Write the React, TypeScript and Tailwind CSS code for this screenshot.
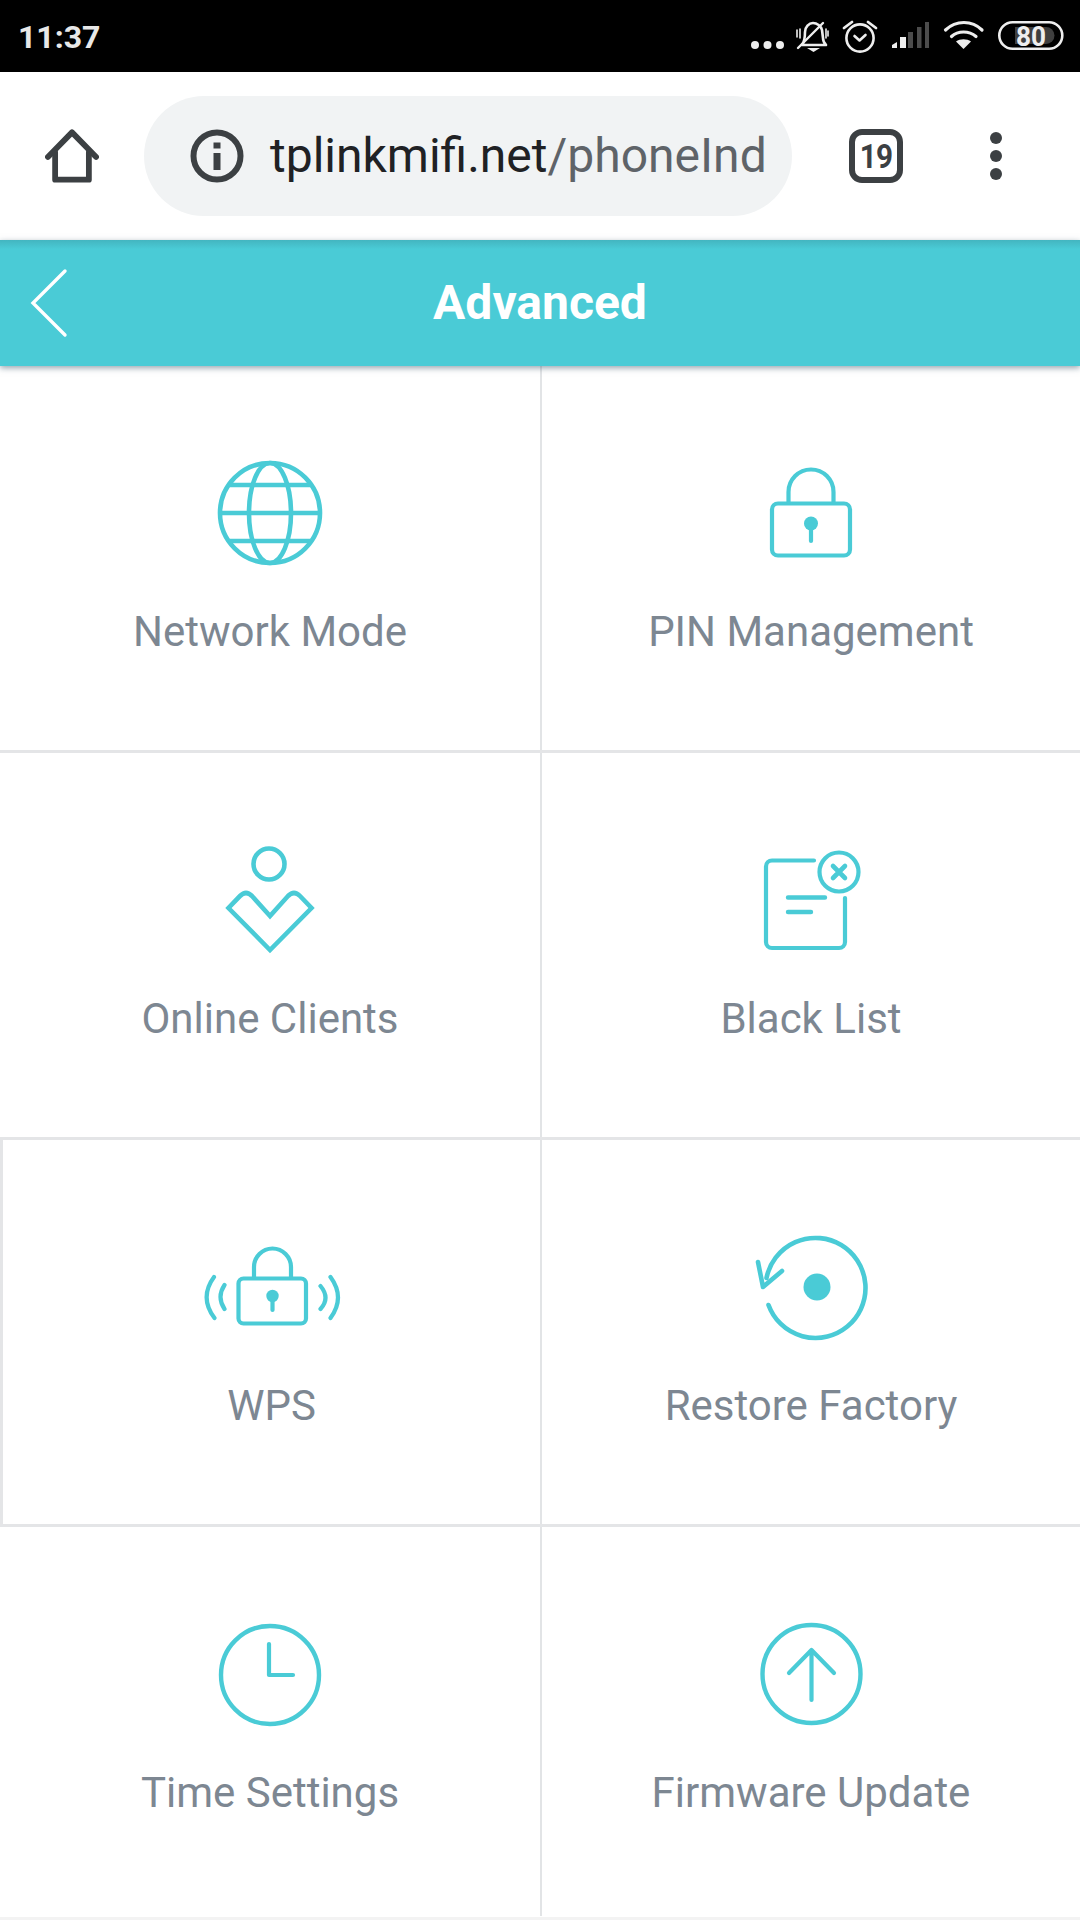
import React from "react";

const C = "#4acbd6";

function Ico({ vb, children }: { vb: string; children: React.ReactNode }) {
  return (
    <svg width="160" height="140" viewBox={vb} fill="none" stroke={C} strokeWidth="4.2" strokeLinecap="round" strokeLinejoin="round" className="block">
      {children}
    </svg>
  );
}

const Globe = () => (
  <Ico vb="10 0 160 140">
    <defs>
      <clipPath id="gc"><circle cx="90" cy="83" r="50" /></clipPath>
    </defs>
    <circle cx="90" cy="83" r="50" strokeWidth="4.6" />
    <ellipse cx="90" cy="83" rx="21" ry="50" strokeWidth="4.6" />
    <g clipPath="url(#gc)" strokeWidth="4.6" strokeLinecap="butt">
      <path d="M35 83H145M35 55H145M35 111H145" />
    </g>
  </Ico>
);

const Lock = () => (
  <Ico vb="2 -10 160 140">
    <rect x="43" y="63.5" width="78" height="52" rx="6" />
    <path d="M59.5 62V52a22.5 22.5 0 0 1 45 0V62" />
    <circle cx="82" cy="83.5" r="7" fill={C} stroke="none" />
    <path d="M82 84V101" />
  </Ico>
);

const Client = () => (
  <Ico vb="0 -13 160 140">
    <circle cx="79" cy="34" r="15.5" strokeWidth="4.6" />
    <path d="M80 86L62 66Q56 60 50 66L38.5 78L80 120L121.5 78L110 66Q104 60 98 66Z" strokeWidth="4.6" strokeLinejoin="miter" />
  </Ico>
);

const BlackList = () => (
  <Ico vb="0 -14 160 140">
    <path d="M83 29.5H41a6 6 0 0 0-6 6V111a6 6 0 0 0 6 6H108a6 6 0 0 0 6-6V67" />
    <path d="M57 66.5H94M57 81H80" strokeWidth="4.4" />
    <circle cx="108" cy="41" r="19.5" />
    <path d="M102 35L114 47M114 35L102 47" strokeWidth="4.6" />
  </Ico>
);

const Wps = () => (
  <Ico vb="1.5 -16 160 140">
    <rect x="48" y="58.5" width="67.5" height="45" rx="5" />
    <path d="M63.5 57V47a18.5 18.5 0 0 1 37 0V57" />
    <circle cx="82" cy="76" r="6.2" fill={C} stroke="none" />
    <path d="M82 76V90" />
    <path d="M23.5 57Q8.5 77.5 24 98M34 65Q26 77 34 89M140 57Q155 77.5 140 98M130 66Q140 78 130 89" />
  </Ico>
);

const Restore = () => (
  <Ico vb="1 -16 160 140">
    <path d="M38.5 85A50 50 0 1 0 36.5 58" strokeWidth="4.6" />
    <path d="M28 42L33 67L52 51" strokeWidth="4.6" />
    <circle cx="87" cy="67" r="13.5" fill={C} stroke="none" />
  </Ico>
);

const Clock = () => (
  <Ico vb="0 -9 160 140">
    <circle cx="80" cy="75" r="49" strokeWidth="4.4" />
    <path d="M79 44V75H103" />
  </Ico>
);

const Upload = () => (
  <Ico vb="1 -9 160 140">
    <circle cx="81.5" cy="74" r="49" strokeWidth="4.4" />
    <path d="M81.5 100V50M59 73L81.5 50L104 73" />
  </Ico>
);

function StatusIcons() {
  return (
    <svg width="360" height="72" viewBox="0 0 360 72" fill="none" className="block">
      <g fill="#eeeeee">
        <circle cx="35" cy="45" r="4" />
        <circle cx="47.5" cy="45" r="4" />
        <circle cx="60" cy="45" r="4" />
      </g>
      {/* muted bell */}
      <g stroke="#eeeeee" strokeWidth="2.6" strokeLinecap="round" strokeLinejoin="round">
        <path d="M82 45c3-4 3-8 3-13 0-5 4-9 8-9s8 3 9 7l1 8c0 3 1 5 3 7z" />
        <path d="M78 48L103 23" strokeWidth="2.4" />
        <path d="M77 30V37M80 29V38M106 29V38M108 31V36" strokeWidth="1.6" />
      </g>
      <path d="M87 48H100L93.500 52Z" fill="#eeeeee" />
      {/* alarm */}
      <g stroke="#eeeeee" strokeWidth="2.6" strokeLinecap="round" strokeLinejoin="round">
        <circle cx="140" cy="38" r="13.600" />
        <path d="M124 28L132 22M148 22L156 28" strokeWidth="2.8" />
        <path d="M134.500 36L139.500 40.500L145.500 35" />
      </g>
      {/* signal */}
      <path d="M172 48V45L177 42V48Z" fill="#eeeeee" />
      <rect x="180" y="37" width="6" height="11" fill="#eeeeee" />
      <rect x="188" y="32" width="5" height="16" fill="#4c4c4c" />
      <rect x="197" y="27" width="4.500" height="21" fill="#4c4c4c" />
      <rect x="205" y="22" width="4" height="26" fill="#4c4c4c" />
      {/* wifi */}
      <g stroke="#eeeeee" strokeWidth="3.200" strokeLinecap="round">
        <path d="M225.500 30C236 20 252 20 262 30" />
        <path d="M231.500 36.500C238 30.500 249 30.500 256 36.500" />
      </g>
      <path d="M236 41.500C240 38.500 247 38.500 251 41.500L243.500 49Z" fill="#eeeeee" />
      {/* battery */}
      <rect x="279.300" y="22.300" width="63" height="26.500" rx="13.250" stroke="#eeeeee" strokeWidth="2.600" />
      <path d="M295 27H326a8.500 8.500 0 0 1 0 17H295Z" fill="#3f3f3f" />
      <text x="311" y="45.500" textAnchor="middle" fill="#eeeeee" fontFamily="Roboto, sans-serif" fontWeight="700" fontSize="27" textLength="30" lengthAdjust="spacingAndGlyphs">80</text>
    </svg>
  );
}

function Cell({ label, icon, left, wall }: { label: string; icon: React.ReactNode; left?: boolean; wall?: boolean }) {
  return (
    <div className={`flex flex-col items-center pt-[64px] ${left ? "border-r-2 border-r-[#e2e4e6]" : ""} ${wall ? "border-l-[3px] border-l-[#e4e5e7]" : ""}`}>
      {icon}
      <div className="mt-[39px] h-[46px] text-[42px] leading-[46px] text-[#7d8792] whitespace-nowrap">{label}</div>
    </div>
  );
}

function Row({ a, b, h, line = true, wall }: { a: [string, React.ReactNode]; b: [string, React.ReactNode]; h: string; line?: boolean; wall?: boolean }) {
  return (
    <div className={`grid grid-cols-[542px_538px] ${h} ${line ? "border-b-[3px] border-b-[#e4e5e7]" : ""}`}>
      <Cell label={a[0]} icon={a[1]} left wall={wall} />
      <Cell label={b[0]} icon={b[1]} />
    </div>
  );
}

export default function App() {
  return (
    <div className="w-[1080px] h-[1920px] overflow-hidden bg-white flex flex-col font-['Roboto',sans-serif]">
      <div className="h-[72px] bg-black flex items-center justify-between shrink-0">
        <span className="ml-[18px] mt-[1px] text-[32px] font-bold text-[#e8e8e8] leading-none">11:37</span>
        <StatusIcons />
      </div>

      <div className="h-[168px] bg-white flex items-center shrink-0">
        <div className="w-[144px] flex justify-center">
          <svg width="54" height="56" viewBox="0 0 56 56" fill="none" stroke="#3c4043" strokeWidth="6" strokeLinecap="round" strokeLinejoin="round">
            <path d="M3 29L28 3.500L53 29" />
            <path d="M10.500 24V52.500H45.500V24" />
          </svg>
        </div>
        <div className="w-[648px] h-[120px] rounded-full bg-[#f1f3f4] flex items-center pl-[46px] overflow-hidden">
          <svg width="54" height="54" viewBox="0 0 54 54" fill="none" className="shrink-0">
            <circle cx="27" cy="27" r="23.500" stroke="#3c4043" strokeWidth="6" />
            <rect x="23.500" y="13.500" width="7" height="6" fill="#3c4043" />
            <rect x="23.500" y="24" width="7" height="17" fill="#3c4043" />
          </svg>
          <div className="ml-[26px] text-[48px] leading-none whitespace-nowrap text-[#202124]">
            tplinkmifi.net<span className="text-[#5f6368]">/phoneInd</span>
          </div>
        </div>
        <div className="ml-[57px] w-[54px] h-[54px] rounded-[13px] border-[6px] border-[#3c4043] flex items-center justify-center">
          <span className="text-[33px] font-bold text-[#3c4043] leading-none tracking-[-1px] scale-x-90">19</span>
        </div>
        <div className="ml-[87px] flex flex-col gap-[6px]">
          <div className="w-3 h-3 rounded-full bg-[#3c4043]" />
          <div className="w-3 h-3 rounded-full bg-[#3c4043]" />
          <div className="w-3 h-3 rounded-full bg-[#3c4043]" />
        </div>
      </div>

      <div className="relative z-10 h-[126px] shrink-0 bg-[#4acbd6] flex items-center justify-center shadow-[0_2px_6px_rgba(60,90,110,0.55)]">
        <div className="absolute inset-x-0 top-0 h-[9px] bg-gradient-to-b from-[#43b5c0] to-[#4acbd6]" />
        <svg width="40" height="70" viewBox="0 0 40 70" fill="none" stroke="white" strokeWidth="3.400" strokeLinecap="round" className="absolute left-[30px] top-[28px]">
          <path d="M35 3L3 35L35 67" />
        </svg>
        <span className="text-[48px] font-bold text-white leading-none">Advanced</span>
      </div>

      <Row h="h-[387px]" a={["Network Mode", <Globe />]} b={["PIN Management", <Lock />]} />
      <Row h="h-[387px]" a={["Online Clients", <Client />]} b={["Black List", <BlackList />]} />
      <Row h="h-[387px]" wall a={["WPS", <Wps />]} b={["Restore Factory", <Restore />]} />
      <Row h="h-[389px]" line={false} a={["Time Settings", <Clock />]} b={["Firmware Update", <Upload />]} />
      <div className="mt-[1px] h-[3px] bg-[#f3f3f3]" />
    </div>
  );
}
